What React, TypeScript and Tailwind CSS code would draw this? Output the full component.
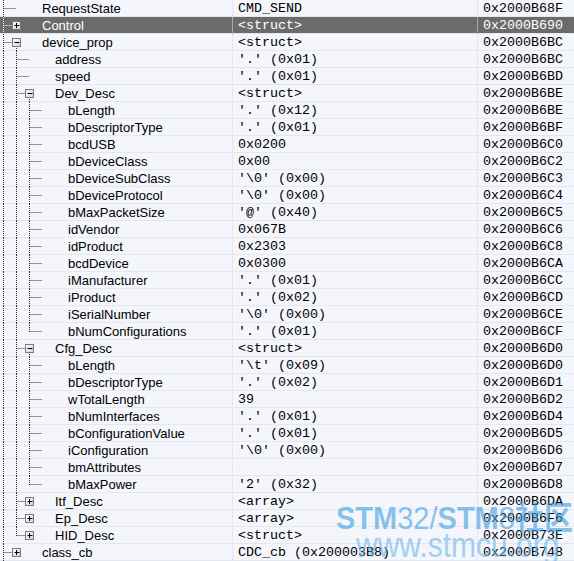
import React from 'react';

type Row = {
  name: string;
  value: string;
  addr: string;
  level: number;
  kind?: 'open' | 'closed';
  last?: boolean;
};

const rows: Row[] = [
  { name: 'RequestState', value: 'CMD_SEND', addr: '0x2000B68F', level: 0 },
  { name: 'Control', value: '<struct>', addr: '0x2000B690', level: 0, kind: 'closed' },
  { name: 'device_prop', value: '<struct>', addr: '0x2000B6BC', level: 0, kind: 'open' },
  { name: 'address', value: "'.' (0x01)", addr: '0x2000B6BC', level: 1 },
  { name: 'speed', value: "'.' (0x01)", addr: '0x2000B6BD', level: 1 },
  { name: 'Dev_Desc', value: '<struct>', addr: '0x2000B6BE', level: 1, kind: 'open' },
  { name: 'bLength', value: "'.' (0x12)", addr: '0x2000B6BE', level: 2 },
  { name: 'bDescriptorType', value: "'.' (0x01)", addr: '0x2000B6BF', level: 2 },
  { name: 'bcdUSB', value: '0x0200', addr: '0x2000B6C0', level: 2 },
  { name: 'bDeviceClass', value: '0x00', addr: '0x2000B6C2', level: 2 },
  { name: 'bDeviceSubClass', value: "'\\0' (0x00)", addr: '0x2000B6C3', level: 2 },
  { name: 'bDeviceProtocol', value: "'\\0' (0x00)", addr: '0x2000B6C4', level: 2 },
  { name: 'bMaxPacketSize', value: "'@' (0x40)", addr: '0x2000B6C5', level: 2 },
  { name: 'idVendor', value: '0x067B', addr: '0x2000B6C6', level: 2 },
  { name: 'idProduct', value: '0x2303', addr: '0x2000B6C8', level: 2 },
  { name: 'bcdDevice', value: '0x0300', addr: '0x2000B6CA', level: 2 },
  { name: 'iManufacturer', value: "'.' (0x01)", addr: '0x2000B6CC', level: 2 },
  { name: 'iProduct', value: "'.' (0x02)", addr: '0x2000B6CD', level: 2 },
  { name: 'iSerialNumber', value: "'\\0' (0x00)", addr: '0x2000B6CE', level: 2 },
  { name: 'bNumConfigurations', value: "'.' (0x01)", addr: '0x2000B6CF', level: 2, last: true },
  { name: 'Cfg_Desc', value: '<struct>', addr: '0x2000B6D0', level: 1, kind: 'open' },
  { name: 'bLength', value: "'\\t' (0x09)", addr: '0x2000B6D0', level: 2 },
  { name: 'bDescriptorType', value: "'.' (0x02)", addr: '0x2000B6D1', level: 2 },
  { name: 'wTotalLength', value: '39', addr: '0x2000B6D2', level: 2 },
  { name: 'bNumInterfaces', value: "'.' (0x01)", addr: '0x2000B6D4', level: 2 },
  { name: 'bConfigurationValue', value: "'.' (0x01)", addr: '0x2000B6D5', level: 2 },
  { name: 'iConfiguration', value: "'\\0' (0x00)", addr: '0x2000B6D6', level: 2 },
  { name: 'bmAttributes', value: '', addr: '0x2000B6D7', level: 2 },
  { name: 'bMaxPower', value: "'2' (0x32)", addr: '0x2000B6D8', level: 2, last: true },
  { name: 'Itf_Desc', value: '<array>', addr: '0x2000B6DA', level: 1, kind: 'closed' },
  { name: 'Ep_Desc', value: '<array>', addr: '0x2000B6F6', level: 1, kind: 'closed' },
  { name: 'HID_Desc', value: '<struct>', addr: '0x2000B73E', level: 1, kind: 'closed', last: true },
  { name: 'class_cb', value: 'CDC_cb (0x200003B8)', addr: '0x2000B748', level: 0, kind: 'closed' },
];

function TreeLines({ row, cont, selected }: { row: Row; cont: boolean[]; selected: boolean }) {
  const L = row.level;
  const color = selected ? '#ffffff' : '#303030';
  const x = 3.5 + 13 * L;
  const width = 42 + 13 * L;
  return (
    <svg width={width} height={17} className="shrink-0 overflow-visible">
      {cont.map((c, a) =>
        c ? (
          <line key={a} x1={3.5 + 13 * a} y1={0} x2={3.5 + 13 * a} y2={17} stroke={color} strokeDasharray="1 1" />
        ) : null,
      )}
      <line x1={x} y1={0} x2={x} y2={row.last ? 9 : 17} stroke={color} strokeDasharray="1 1" />
      <line x1={x + 1} y1={8.5} x2={row.kind ? x + 9 : x + 12} y2={8.5} stroke={color} strokeDasharray="1 1" />
      {row.kind === 'open' && (
        <line x1={x + 13} y1={14} x2={x + 13} y2={17} stroke="#303030" strokeDasharray="1 1" />
      )}
      {row.kind && (
        <g>
          <defs>
            <linearGradient id={`bx${L}`} x1="0" y1="0" x2="1" y2="1">
              <stop offset="0" stopColor="#ffffff" />
              <stop offset="1" stopColor="#d4d0c8" />
            </linearGradient>
          </defs>
          <rect x={x + 9} y={4.5} width={8} height={8} fill={`url(#bx${L})`} stroke="#7a7a7a" />
          <line x1={x + 11} y1={8.5} x2={x + 16} y2={8.5} stroke="#000" />
          {row.kind === 'closed' && <line x1={x + 13} y1={6} x2={x + 13} y2={11} stroke="#000" />}
        </g>
      )}
    </svg>
  );
}

export default function App() {
  const lastStack: boolean[] = [];
  return (
    <div className="relative h-[561px] w-[574px] overflow-hidden bg-[#f4f6fb] text-black">
      {rows.map((row, i) => {
        lastStack[row.level] = !!row.last;
        const cont = lastStack.slice(0, row.level).map((l) => !l);
        const selected = row.name === 'Control';
        return (
          <div
            key={i}
            className={`flex h-[17px] shadow-[inset_0_-1px_0_#e3e7ef] ${selected ? 'bg-[#6b6b6b] text-white' : ''}`}
          >
            <div className="flex w-[232px] shrink-0 items-start overflow-hidden">
              <TreeLines row={row} cont={cont} selected={selected} />
              <span className="whitespace-nowrap font-['Liberation_Sans',Arial,sans-serif] text-[13px] leading-[17px]">
                {row.name}
              </span>
            </div>
            <div
              className={`w-[245px] shrink-0 border-l pl-[5px] font-['Liberation_Mono','Courier_New',monospace] text-[13.33px] leading-[18px] whitespace-pre ${selected ? 'border-[#a8a8a8]' : 'border-[#e3e7ef]'}`}
            >
              {row.value}
            </div>
            <div
              className={`flex-1 border-l pl-[5px] font-['Liberation_Mono','Courier_New',monospace] text-[13.33px] leading-[18px] whitespace-pre ${selected ? 'border-[#a8a8a8]' : 'border-[#e3e7ef]'}`}
            >
              {row.addr}
            </div>
          </div>
        );
      })}

      <div className="pointer-events-none absolute left-[336px] top-[498px] whitespace-nowrap text-[#3f9fe2] opacity-60">
        <div className="origin-top-left scale-y-[1.1] font-['Liberation_Sans','Noto_Sans_CJK_SC',sans-serif] text-[29px] leading-[30px]">
          <span className="font-bold">STM</span>
          <span>32/</span>
          <span className="font-bold">STM</span>
          <span>8</span>
          <span className="font-bold font-['Noto_Sans_CJK_SC',sans-serif]">社区</span>
        </div>
        <div className="ml-[20px] -mt-[2px] origin-top-left scale-y-[1.15] font-['Liberation_Sans',sans-serif] text-[30px] leading-[28px] text-[#6bb6ea]">
          www.stmcu.org
        </div>
      </div>
    </div>
  );
}
